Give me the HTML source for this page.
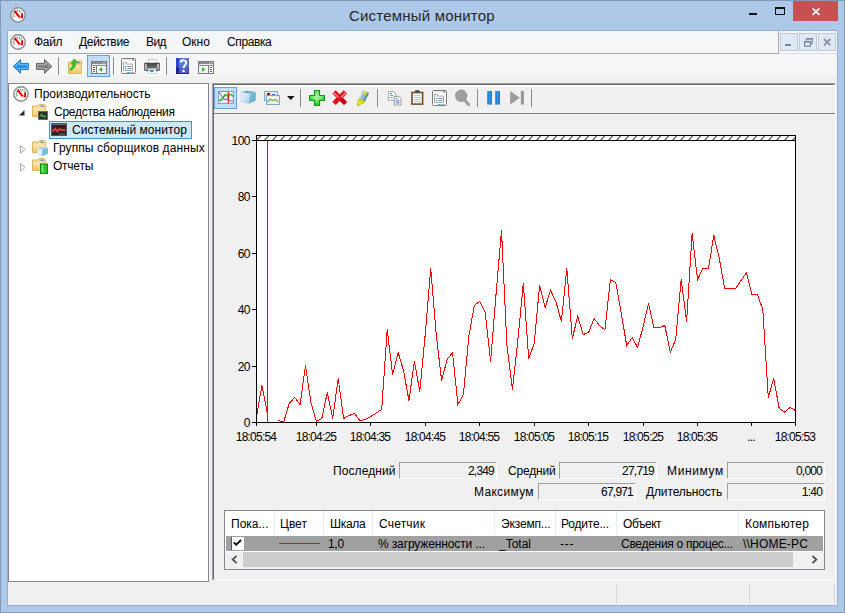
<!DOCTYPE html>
<html><head><meta charset="utf-8">
<style>
*{box-sizing:border-box;margin:0;padding:0}
html,body{width:845px;height:613px;overflow:hidden}
body{background:#adc8e8;font-family:"Liberation Sans",sans-serif;font-size:12px;color:#000;position:relative}
.abs{position:absolute}
.t{position:absolute;white-space:nowrap;line-height:14px;height:14px}
#frame{left:0;top:0;width:845px;height:613px;border:1px solid #8299b7}
#inner{left:7px;top:30px;width:831px;height:576px;border:1px solid #93b1da;background:#f0f0f0}
#menubar{left:8px;top:31px;width:829px;height:23px;background:#f5f6f7;border-bottom:1px solid #dcdde0}
#menuband{left:8px;top:31px;width:771px;height:23px;border-bottom:1px solid #a9a9a9;border-right:1px solid #a9a9a9}
#toolbar{left:8px;top:54px;width:829px;height:22px;background:#f5f6f7}
#tbshadow{left:8px;top:77px;width:829px;height:3px;background:#ebebeb}
#tree{left:8px;top:83px;width:201px;height:499px;background:#fff;border:1px solid #828790}
#rp{left:212px;top:83px;width:624px;height:498px;border-top:1px solid #a0a0a0;border-left:1px solid #a0a0a0;border-right:1px solid #fff;border-bottom:1px solid #fff;background:#f0f0f0}
#rp2{left:213px;top:84px;width:622px;height:496px;border-top:1px solid #696969;border-left:1px solid #696969;border-right:1px solid #f0f0f0;border-bottom:1px solid #f0f0f0}
#rptb{left:214px;top:85px;width:621px;height:29px;background:#f0f0f0;border-top:2px solid #fff;border-bottom:1px solid #828282}
.ax{letter-spacing:-0.5px}
.xl{letter-spacing:-0.78px}
.sep{position:absolute;width:1px;background:#8c8c8c}
.selbtn{position:absolute;background:#c4ddf6;border:1px solid #62a2e4}
.sunk{position:absolute;height:17px;width:98px;border-top:1px solid #a0a0a0;border-left:1px solid #a0a0a0;border-bottom:1px solid #fff;border-right:1px solid #fff;background:#f0f0f0}
.mdi{position:absolute;top:33px;width:18px;height:18px;background:#dfe9f5;border:1px solid #c0cad6}
</style></head><body>
<div class="abs" id="frame"></div>
<div class="abs" id="inner"></div>
<!-- title -->
<div class="t" id="title" style="left:349px;top:7px;font-size:15px;line-height:18px;height:18px;color:#262626;letter-spacing:0.2px">Системный монитор</div>
<div class="abs" style="left:749px;top:13px;width:8px;height:2px;background:#111"></div>
<div class="abs" style="left:775px;top:7px;width:10px;height:8px;border:1px solid #111;border-top-width:2px"></div>
<div class="abs" style="left:793px;top:1px;width:45px;height:20px;background:#c75050"></div>
<svg class="abs" style="left:811px;top:7px" width="10" height="9" viewBox="0 0 10 9"><path d="M1.6 1.4 L8.4 7.8 M8.4 1.4 L1.6 7.8" stroke="#fff" stroke-width="1.7" fill="none"/></svg>
<!-- menubar -->
<div class="abs" id="menubar"></div>
<div class="abs" id="menuband"></div>
<div class="t" id="m1" style="left:34px;top:35px;letter-spacing:-0.3px">Файл</div>
<div class="t" id="m2" style="left:79px;top:35px;letter-spacing:-0.33px">Действие</div>
<div class="t" id="m3" style="left:146px;top:35px;letter-spacing:-0.6px">Вид</div>
<div class="t" id="m4" style="left:182px;top:35px">Окно</div>
<div class="t" id="m5" style="left:227px;top:35px;letter-spacing:-0.38px">Справка</div>
<div class="mdi" style="left:780px"></div>
<div class="mdi" style="left:799px"></div>
<div class="mdi" style="left:818px"></div>
<!-- toolbar -->
<div class="abs" id="toolbar"></div>
<div class="sep" style="left:58px;top:57px;height:18px"></div>
<div class="selbtn" style="left:87px;top:55px;width:23px;height:22px"></div>
<div class="sep" style="left:113px;top:57px;height:18px"></div>
<div class="sep" style="left:166px;top:57px;height:18px"></div>
<!-- tree -->
<div class="abs" id="tree"></div>
<div class="t" id="tr1" style="left:34px;top:87px">Производительность</div>
<div class="t" id="tr2" style="left:54px;top:105px;letter-spacing:-0.245px">Средства наблюдения</div>
<div class="abs" style="left:49px;top:121px;width:143px;height:18px;background:#cbe8f6;border:1px solid #26a0da"></div>
<div class="t" id="tr3" style="left:72px;top:123px;letter-spacing:0.06px">Системный монитор</div>
<div class="t" id="tr4" style="left:53px;top:141px;letter-spacing:0.1px">Группы сборщиков данных</div>
<div class="t" id="tr5" style="left:53px;top:159px;letter-spacing:-0.24px">Отчеты</div>
<!-- right panel -->
<div class="abs" id="rp"></div>
<div class="abs" id="rp2"></div>
<div class="abs" id="rptb"></div>
<div class="selbtn" style="left:214px;top:87px;width:23px;height:22px"></div>
<div class="sep" style="left:300px;top:89px;height:18px"></div>
<div class="sep" style="left:377px;top:89px;height:18px"></div>
<div class="sep" style="left:477px;top:89px;height:18px"></div>
<div class="sep" style="left:531px;top:89px;height:18px"></div>
<!-- chart -->
<svg class="abs" id="chart" style="left:214px;top:114px" width="621" height="340" viewBox="214 114 621 340">
<defs><pattern id="hatch" x="256" y="136" width="8" height="4" patternUnits="userSpaceOnUse"><path d="M0.6 4.2 L4.8 -0.2" stroke="#4a4a4a" stroke-width="1.1" fill="none"/></pattern></defs>
<rect x="256" y="135" width="540" height="288" fill="#fff"/>
<rect x="257" y="136" width="538" height="4" fill="url(#hatch)"/>
<polyline points="256.5,416.5 261.9,385.5 267.4,413.5 267.5,421.5" fill="none" stroke="#f00" stroke-width="1" shape-rendering="crispEdges"/>
<polyline points="278.3,420.5 283.7,422.0 289.2,403.5 294.6,397.5 300.1,404.5 305.5,365.5 310.9,402.5 316.4,421.5 321.8,418.5 327.3,392.5 332.7,418.5 338.2,378.5 343.6,418.5 349.1,415.5 354.5,413.5 359.9,420.5 365.4,419.5 370.8,416.5 376.3,413.0 381.7,409.5 387.2,329.5 392.6,374.5 398.1,352.5 403.5,370.5 408.9,400.5 414.4,361.5 419.8,391.5 425.3,333.5 430.7,268.5 436.2,334.5 441.6,380.5 447.1,359.5 452.5,352.5 457.9,404.5 463.4,394.5 468.8,336.5 474.3,305.5 479.7,301.5 485.2,312.5 490.6,361.5 496.1,293.5 501.5,230.5 506.9,345.5 512.4,389.5 517.8,340.5 523.3,283.5 528.7,358.5 534.2,343.5 539.6,285.5 545.1,307.5 550.5,290.5 555.9,301.5 561.4,321.5 566.8,268.5 572.3,338.5 577.7,316.5 583.2,334.5 588.6,332.5 594.1,318.5 599.5,325.5 604.9,330.0 610.4,279.5 615.8,282.5 621.3,313.5 626.7,345.5 632.2,337.5 637.6,347.5 643.1,326.5 648.5,303.5 653.9,327.5 659.4,327.5 664.8,325.5 670.3,352.5 675.7,339.5 681.2,279.5 686.6,321.5 692.1,233.5 697.5,279.5 702.9,268.5 708.4,268.5 713.8,235.5 719.3,258.5 724.7,288.5 730.2,288.5 735.6,288.5 741.1,280.5 746.5,272.5 751.9,294.5 757.4,294.5 762.8,309.5 768.3,397.5 773.7,378.5 779.2,408.5 784.6,412.0 790.1,407.5 795.5,410.5" fill="none" stroke="#f00" stroke-width="1" shape-rendering="crispEdges"/>
<rect x="267" y="141" width="1" height="281" fill="#f00"/>
<g fill="#000" shape-rendering="crispEdges">
<rect x="256" y="135" width="540" height="1"/>
<rect x="256" y="140" width="540" height="1"/>
<rect x="256" y="135" width="1" height="291"/>
<rect x="795" y="135" width="1" height="291"/>
<rect x="252" y="422" width="544" height="1"/>
<rect x="252" y="140" width="4" height="1"/>
<rect x="252" y="196" width="4" height="1"/>
<rect x="252" y="253" width="4" height="1"/>
<rect x="252" y="309" width="4" height="1"/>
<rect x="252" y="366" width="4" height="1"/>
<rect x="252" y="422" width="4" height="1"/>
<rect x="316" y="422" width="1" height="4"/>
<rect x="370" y="422" width="1" height="4"/>
<rect x="425" y="422" width="1" height="4"/>
<rect x="479" y="422" width="1" height="4"/>
<rect x="534" y="422" width="1" height="4"/>
<rect x="588" y="422" width="1" height="4"/>
<rect x="643" y="422" width="1" height="4"/>
<rect x="697" y="422" width="1" height="4"/>
<rect x="751" y="422" width="1" height="4"/>
</g>
</svg>
<div class="t ax" style="right:595px;top:134px">100</div>
<div class="t ax" style="right:595px;top:190px">80</div>
<div class="t ax" style="right:595px;top:247px">60</div>
<div class="t ax" style="right:595px;top:303px">40</div>
<div class="t ax" style="right:595px;top:360px">20</div>
<div class="t ax" style="right:595px;top:416px">0</div>
<div class="t ax xl" style="left:226px;width:60px;text-align:center;top:430px">18:05:54</div>
<div class="t ax xl" style="left:286px;width:60px;text-align:center;top:430px">18:04:25</div>
<div class="t ax xl" style="left:340px;width:60px;text-align:center;top:430px">18:04:35</div>
<div class="t ax xl" style="left:395px;width:60px;text-align:center;top:430px">18:04:45</div>
<div class="t ax xl" style="left:449px;width:60px;text-align:center;top:430px">18:04:55</div>
<div class="t ax xl" style="left:504px;width:60px;text-align:center;top:430px">18:05:05</div>
<div class="t ax xl" style="left:558px;width:60px;text-align:center;top:430px">18:05:15</div>
<div class="t ax xl" style="left:613px;width:60px;text-align:center;top:430px">18:05:25</div>
<div class="t ax xl" style="left:667px;width:60px;text-align:center;top:430px">18:05:35</div>
<div class="t ax xl" style="left:721px;width:60px;text-align:center;top:430px">...</div>
<div class="t ax xl" style="left:765px;width:60px;text-align:center;top:430px">18:05:53</div>
<!-- stats -->
<div class="t" id="s1" style="left:333px;top:464px;letter-spacing:0.09px">Последний</div>
<div class="sunk" style="left:399px;top:462px"></div>
<div class="t" id="v1" style="right:351px;top:464px;letter-spacing:-0.8px">2,349</div>
<div class="t" id="s2" style="left:508px;top:464px;letter-spacing:-0.2px">Средний</div>
<div class="sunk" style="left:559px;top:462px"></div>
<div class="t" id="v2" style="right:191px;top:464px;letter-spacing:-0.8px">27,719</div>
<div class="t" id="s3" style="left:667px;top:464px;letter-spacing:0.63px">Минимум</div>
<div class="sunk" style="left:727px;top:462px"></div>
<div class="t" id="v3" style="right:23px;top:464px;letter-spacing:-0.8px">0,000</div>
<div class="t" id="s4" style="left:474px;top:485px;letter-spacing:0.31px">Максимум</div>
<div class="sunk" style="left:538px;top:483px"></div>
<div class="t" id="v4" style="right:212px;top:485px;letter-spacing:-0.8px">67,971</div>
<div class="t" id="s5" style="left:646px;top:485px;letter-spacing:-0.14px">Длительность</div>
<div class="sunk" style="left:727px;top:483px"></div>
<div class="t" id="v5" style="right:23px;top:485px;letter-spacing:-0.8px">1:40</div>
<!-- list -->
<div class="abs" id="list" style="left:224px;top:510px;width:601px;height:60px;background:#fff;border:1px solid #828790"></div>
<div class="abs" style="left:226px;top:536px;width:597px;height:15px;background:#a0a0a0"></div>
<div class="abs" style="left:225px;top:552px;width:599px;height:17px;background:#f0f0f0"></div>
<div class="abs" style="left:243px;top:552px;width:550px;height:15px;background:#cdcdcd"></div>
<!-- LIST -->
<div class="abs" style="left:274px;top:511px;width:1px;height:24px;background:#e3ebf4"></div>
<div class="abs" style="left:323px;top:511px;width:1px;height:24px;background:#e3ebf4"></div>
<div class="abs" style="left:372px;top:511px;width:1px;height:24px;background:#e3ebf4"></div>
<div class="abs" style="left:494px;top:511px;width:1px;height:24px;background:#e3ebf4"></div>
<div class="abs" style="left:555px;top:511px;width:1px;height:24px;background:#e3ebf4"></div>
<div class="abs" style="left:616px;top:511px;width:1px;height:24px;background:#e3ebf4"></div>
<div class="abs" style="left:738px;top:511px;width:1px;height:24px;background:#e3ebf4"></div>
<div class="t" id="h1" style="left:231px;top:517px">Пока...</div>
<div class="t" id="h2" style="left:280px;top:517px">Цвет</div>
<div class="t" id="h3" style="left:330px;top:517px;letter-spacing:-0.3px">Шкала</div>
<div class="t" id="h4" style="left:379px;top:517px;letter-spacing:0.2px">Счетчик</div>
<div class="t" id="h5" style="left:501px;top:517px;letter-spacing:-0.16px">Экземп...</div>
<div class="t" id="h6" style="left:561px;top:517px;letter-spacing:-0.2px">Родите...</div>
<div class="t" id="h7" style="left:623px;top:517px;letter-spacing:-0.45px">Объект</div>
<div class="t" id="h8" style="left:745px;top:517px;letter-spacing:0.22px">Компьютер</div>
<div class="abs" style="left:231px;top:537px;width:13px;height:13px;background:#fff;border-left:1px solid #555"></div>
<svg class="abs" style="left:233px;top:539px" width="9" height="8" viewBox="0 0 9 8"><path d="M0.8 3.4 L3.2 5.8 L8 1" stroke="#000" stroke-width="1.8" fill="none"/></svg>
<div class="abs" style="left:279px;top:543px;width:41px;height:1px;background:#f00"></div>
<div class="t" id="r3" style="left:328px;top:537px;letter-spacing:-0.3px">1,0</div>
<div class="t" id="r4" style="left:378px;top:537px;letter-spacing:-0.13px">% загруженности ...</div>
<div class="t" id="r5" style="left:499px;top:537px">_Total</div>
<div class="t" id="r6" style="left:560px;top:537px;letter-spacing:0.8px">---</div>
<div class="t" id="r7" style="left:621px;top:537px;letter-spacing:-0.29px">Сведения о процес...</div>
<div class="t" id="r8" style="left:743px;top:537px;letter-spacing:0.2px">\\HOME-PC</div>
<svg class="abs" style="left:231px;top:555px" width="7" height="9" viewBox="0 0 7 9"><path d="M5.6 0.8 L1.6 4.5 L5.6 8.2" stroke="#505050" stroke-width="1.8" fill="none"/></svg>
<svg class="abs" style="left:811px;top:555px" width="7" height="9" viewBox="0 0 7 9"><path d="M1.4 0.8 L5.4 4.5 L1.4 8.2" stroke="#505050" stroke-width="1.8" fill="none"/></svg>
<!-- /LIST -->
<!-- status bar -->
<div class="abs" style="left:8px;top:582px;width:829px;height:23px;background:#f0f0f0"></div>
<div class="abs" style="left:616px;top:584px;width:1px;height:20px;background:#d7d7d7"></div>
<div class="abs" style="left:749px;top:584px;width:1px;height:20px;background:#d7d7d7"></div>
<div class="abs" style="left:834px;top:584px;width:1px;height:20px;background:#d7d7d7"></div>
<!-- ICONS -->
<svg width="0" height="0" style="position:absolute"><defs>
<symbol id="perf" viewBox="0 0 16 16"><circle cx="8" cy="8" r="7.2" fill="#fff" stroke="#8e8e8e" stroke-width="1.5"/><path d="M4.2 10.2 A4.1 4.1 0 0 1 11.6 5.6" stroke="#3f7a62" stroke-width="1.5" stroke-dasharray="1.1 0.9" fill="none"/><path d="M12.1 6.2 L12.1 10.2 L10.6 10.6" stroke="#d80000" stroke-width="1.8" fill="none"/><path d="M4.6 3.8 L9.7 10.4" stroke="#ee0000" stroke-width="2.1"/></symbol>
<linearGradient id="gblue" x1="0" y1="0" x2="0" y2="1"><stop offset="0" stop-color="#4fb4f4"/><stop offset="0.55" stop-color="#1f8fe6"/><stop offset="1" stop-color="#3aa6f0"/></linearGradient>
<linearGradient id="ggray" x1="0" y1="0" x2="0" y2="1"><stop offset="0" stop-color="#a4a4a4"/><stop offset="0.55" stop-color="#7c7c7c"/><stop offset="1" stop-color="#9c9c9c"/></linearGradient>
<linearGradient id="gfold" x1="0" y1="0" x2="0" y2="1"><stop offset="0" stop-color="#fbe8ae"/><stop offset="1" stop-color="#efc868"/></linearGradient>
<linearGradient id="gprn" x1="0" y1="0" x2="0" y2="1"><stop offset="0" stop-color="#3c3c3c"/><stop offset="1" stop-color="#8e8e8e"/></linearGradient>
<linearGradient id="gpause" x1="0" y1="0" x2="1" y2="0"><stop offset="0" stop-color="#1766c4"/><stop offset="0.5" stop-color="#2f9df0"/><stop offset="1" stop-color="#1766c4"/></linearGradient>
<radialGradient id="gplus" cx="0.5" cy="0.45" r="0.6"><stop offset="0" stop-color="#b4f6b4"/><stop offset="0.5" stop-color="#5fe05f"/><stop offset="1" stop-color="#22bc22"/></radialGradient>
<symbol id="win" viewBox="0 0 16 13"><rect x="0.5" y="0.5" width="15" height="12" fill="#fff" stroke="#7a7a7a"/><rect x="1" y="1" width="14" height="2" fill="#8a8a8a"/><rect x="11.5" y="1.2" width="1" height="1" fill="#fff"/><rect x="13.5" y="1.2" width="1" height="1" fill="#fff"/><rect x="1" y="3" width="14" height="1" fill="#e8e8e8"/><rect x="1" y="4" width="14" height="1" fill="#8a8a8a"/></symbol>
<symbol id="prop" viewBox="0 0 15 16"><rect x="0.5" y="0.5" width="14" height="15" rx="1" fill="#fff" stroke="#7c7c7c"/><rect x="1.5" y="1.5" width="12" height="1" fill="#d8d8d8"/><rect x="11.5" y="1" width="1.5" height="1.5" fill="#5a6a9a"/><path d="M2.5 4.5 H5.5 V6 H11.5 V12.5 H2.5 Z" fill="#f4f5fa" stroke="#a3aabd"/><rect x="4" y="7.8" width="1.4" height="1.4" fill="#19b4f0"/><rect x="4" y="10" width="1.2" height="1.2" fill="#8a90a0"/><rect x="6.3" y="8" width="4" height="1" fill="#8a90a0"/><rect x="6.3" y="10" width="4" height="1" fill="#8a90a0"/><rect x="6" y="14" width="3" height="1" fill="#19c0f4"/><rect x="10" y="14" width="3" height="1" fill="#b0b0b0"/></symbol>
</defs></svg>
<!-- title + menu icons -->
<svg class="abs" style="left:10px;top:7px" width="16" height="16"><use href="#perf"/></svg>
<svg class="abs" style="left:10px;top:34px" width="16" height="16"><use href="#perf"/></svg>
<svg class="abs" style="left:13px;top:86px" width="16" height="16"><use href="#perf"/></svg>
<!-- main toolbar icons -->
<svg class="abs" style="left:12px;top:58px" width="42" height="17" viewBox="12 58 42 17">
<path d="M13.4 66.4 L20.5 59.6 V63.4 H28.3 V69.4 H20.5 V73.2 Z" fill="url(#gblue)" stroke="#1a6fcc" stroke-width="1" stroke-linejoin="round"/>
<path d="M15 66.4 L19.5 62 V64.4 H27.3 V68.4 H19.5 V70.8 Z" fill="none" stroke="#8ad0fb" stroke-width="0.8" opacity="0.85"/>
<path d="M51.8 66.4 L44.6 59.6 V63.4 H36.6 V69.4 H44.6 V73.2 Z" fill="url(#ggray)" stroke="#5c5c5c" stroke-width="1" stroke-linejoin="round"/>
<path d="M50.2 66.4 L45.6 62 V64.4 H37.6 V68.4 H45.6 V70.8 Z" fill="none" stroke="#c2c2c2" stroke-width="0.8" opacity="0.8"/>
</svg>
<svg class="abs" style="left:67px;top:58px" width="16" height="17" viewBox="67 58 16 17">
<path d="M68.5 62 H75 L76 61 H81 L81.5 62 V73.5 H68.5 Z" fill="#f3d587" stroke="#d8b25e" stroke-width="1"/>
<rect x="69" y="64.5" width="12.5" height="9" fill="url(#gfold)" stroke="#dcb860" stroke-width="0.6"/>
<rect x="77.3" y="62" width="2.6" height="1.4" rx="0.6" fill="#3d8fe8"/>
<path d="M69.8 69.4 C72 67.8 72.8 65.6 73 63.2 L71 63.6 L74.2 58.8 L77.6 62.6 L75.8 62.8 C76 66.6 73.8 69.2 70.6 70.6 Z" fill="#3fc030" stroke="#2a9a20" stroke-width="0.6"/>
</svg>
<svg class="abs" style="left:91px;top:61px" width="16" height="13"><use href="#win"/><rect x="1" y="5" width="4" height="7" fill="#f4f4f4"/><rect x="5" y="5" width="1" height="7" fill="#7a7a7a"/><rect x="2" y="6" width="2" height="1" fill="#2f6fd0"/><rect x="2" y="8" width="2" height="1" fill="#2f6fd0"/><rect x="2" y="10" width="2" height="1" fill="#2f6fd0"/><path d="M11 6 L11 11 L7.6 8.5 Z" fill="#3dbb2e"/><rect x="12" y="5" width="3" height="7" fill="#f0f0f0"/></svg>
<svg class="abs" style="left:121px;top:58px" width="15" height="16"><use href="#prop"/></svg>
<svg class="abs" style="left:144px;top:59px" width="16" height="15" viewBox="144 59 16 15">
<rect x="148.5" y="59.5" width="7.5" height="4" fill="#fff" stroke="#c4c4c4"/>
<rect x="144.3" y="63" width="15.5" height="7.6" rx="0.8" fill="url(#gprn)" stroke="#555" stroke-width="0.6"/>
<rect x="145" y="64" width="2" height="4.5" fill="#b4b4b4"/><rect x="157" y="64" width="2" height="4.5" fill="#b4b4b4"/>
<rect x="147" y="68.6" width="10" height="1.4" fill="#e8e8e8"/>
<rect x="148.5" y="70" width="7.5" height="3.5" fill="#fff" stroke="#b9cbd6" stroke-width="0.8"/>
<rect x="150.3" y="70" width="1.5" height="2" fill="#2a6ae0"/><rect x="151.8" y="70" width="1.5" height="2" fill="#2f9a3a"/>
<rect x="147" y="69.8" width="1.3" height="1.2" fill="#222"/><rect x="156" y="69.8" width="1.3" height="1.2" fill="#222"/>
</svg>
<svg class="abs" style="left:176px;top:58px" width="13" height="16" viewBox="0 0 13 16">
<rect x="0" y="0" width="13" height="16" fill="#4f6fdc"/><rect x="0" y="0" width="3" height="16" fill="#2b44c4"/>
<rect x="0" y="9.5" width="13" height="6.5" fill="#3a3fae" opacity="0.85"/><rect x="0" y="9.5" width="3" height="6.5" fill="#22228a"/>
<rect x="3" y="0" width="9" height="16" fill="#6c88e8" opacity="0.35"/>
<path d="M4.6 4.6 C4.6 1.6 10.2 1.6 10.2 4.8 C10.2 7 7.6 7.4 7.6 10.2" stroke="#fff" stroke-width="2" fill="none"/><circle cx="7.5" cy="13" r="1.3" fill="#fff"/>
<rect x="0" y="15.3" width="13" height="0.7" fill="#1a1a60"/>
</svg>
<svg class="abs" style="left:198px;top:61px" width="16" height="13"><use href="#win"/><rect x="1" y="5" width="9" height="7" fill="#f4f4f4"/><rect x="10" y="5" width="1" height="7" fill="#7a7a7a"/><rect x="12" y="6" width="2" height="1" fill="#2f6fd0"/><rect x="12" y="8" width="2" height="1" fill="#2f6fd0"/><rect x="12" y="10" width="2" height="1" fill="#2f6fd0"/><path d="M4 6 L4 11 L7.4 8.5 Z" fill="#3dbb2e"/></svg>
<!-- /ICONS -->
<!-- ICONS2 -->
<!-- chart icon -->
<svg class="abs" style="left:218px;top:91px" width="16" height="13" viewBox="0 0 16 13">
<rect x="0.5" y="0.5" width="15" height="12" fill="#e6f1fa" stroke="#8a9cc4"/>
<path d="M4.5 1 V12 M8.5 1 V12 M12.5 1 V12 M1 4.5 H15 M1 8.5 H15" stroke="#fff" stroke-width="0.8"/>
<path d="M1.2 1.2 L5.5 8.3 H11 L12 10 H15" stroke="#4d6cc8" stroke-width="1" fill="none"/>
<path d="M1 9 L2.5 9.6 L5 7 L7 3.8 L8.6 4 L10 6 L12 3.4 L13.5 3.6 L15 5.6" stroke="#2fae2a" stroke-width="1.5" fill="none"/>
<rect x="9.7" y="0.6" width="1.2" height="11.8" fill="#e81818"/>
</svg>
<!-- cube -->
<svg class="abs" style="left:239px;top:90px" width="18" height="15" viewBox="239 90 18 15">
<defs><linearGradient id="cf" x1="0" y1="0" x2="1" y2="1"><stop offset="0" stop-color="#f4f9fd"/><stop offset="0.5" stop-color="#cfe3f4"/><stop offset="1" stop-color="#9ecbe4"/></linearGradient>
<linearGradient id="cr" x1="0" y1="0" x2="1" y2="1"><stop offset="0" stop-color="#8cc7dc"/><stop offset="1" stop-color="#4fa9c4"/></linearGradient></defs>
<path d="M240.3 92.6 L246.5 90.8 L256 92 L249.5 93.6 Z" fill="#6aa9c8"/>
<path d="M240.3 92.6 L249.5 93.6 L249.2 103.8 L240.6 101.6 Z" fill="url(#cf)" stroke="#b9d7ea" stroke-width="0.5"/>
<path d="M249.5 93.6 L256 92 L255.6 100.6 L249.2 103.8 Z" fill="url(#cr)"/>
</svg>
<!-- windows icon -->
<svg class="abs" style="left:264px;top:91px" width="16" height="14" viewBox="0 0 16 14">
<rect x="0.5" y="0.5" width="13" height="9" fill="#ece9e2" stroke="#86a8dc"/>
<rect x="3" y="2" width="3" height="2" fill="#a80024"/><rect x="8" y="3" width="3" height="1" fill="#3a6fe0"/>
<rect x="2.5" y="4.5" width="13" height="9" fill="#eeebe2" stroke="#7ea6da"/>
<rect x="5" y="6" width="1.6" height="6" fill="#fff"/><rect x="8" y="6" width="1.6" height="6" fill="#fff"/><rect x="11" y="6" width="1.6" height="6" fill="#fff"/>
<path d="M3.5 11.3 L6 8 L8.5 9.6 L11.5 8.4 L14 11" stroke="#55b83a" stroke-width="1.2" fill="none"/>
</svg>
<svg class="abs" style="left:287px;top:96px" width="8" height="4" viewBox="0 0 8 4"><path d="M0 0 H7.6 L3.8 4 Z" fill="#111"/></svg>
<!-- plus -->
<svg class="abs" style="left:309px;top:90px" width="16" height="16" viewBox="0 0 16 16">
<path d="M5.5 0.5 H10.5 V5.5 H15.5 V10.5 H10.5 V15.5 H5.5 V10.5 H0.5 V5.5 H5.5 Z" fill="url(#gplus)" stroke="#0c9c10" stroke-width="1.2" stroke-linejoin="round"/>
<path d="M6.8 1.8 H9.2 V6.8 H14.2 M6.8 1.8 V6.8 H1.8" stroke="#a4f2a4" stroke-width="0.8" fill="none" opacity="0.8"/>
</svg>
<!-- red X -->
<svg class="abs" style="left:331px;top:89px" width="18" height="18" viewBox="331 89 18 18">
<path d="M334 92 L345.4 103.4 M345.4 92 L334 103.4" stroke="#e01018" stroke-width="4.6" stroke-linecap="butt"/>
<path d="M333.4 92.6 L338.6 97.6 M346 92.6 L341 97.4" stroke="#f4707a" stroke-width="2" stroke-linecap="butt"/>
<path d="M341.5 99.5 L345.6 103.6" stroke="#c40008" stroke-width="3" stroke-linecap="butt"/>
</svg>
<!-- pen -->
<svg class="abs" style="left:355px;top:89px" width="16" height="18" viewBox="355 89 16 18">
<path d="M363 90.4 L369 93 L364.4 102.6 L358.6 99.8 Z" fill="#8fbacc"/>
<path d="M367.2 92.2 L369 93 L364.4 102.6 L362.8 101.8 Z" fill="#5f8c9e"/>
<path d="M363 90.8 L359.4 99.4" stroke="#c4dce6" stroke-width="1.2"/>
<path d="M363.4 91 L366.8 92.4 L365.6 95.2 L362.6 94 Z" fill="#e4dc08"/>
<path d="M358.6 99.4 L364.6 102.4 L357.4 105.8 Z" fill="#f0e800" stroke="#b0a400" stroke-width="0.7"/>
<path d="M358.4 99.2 L364.8 102.2" stroke="#d8d000" stroke-width="1.8"/>
</svg>
<!-- copy -->
<svg class="abs" style="left:387px;top:90px" width="15" height="16" viewBox="387 90 15 16">
<path d="M388.3 91.5 H393.5 L395.7 93.7 V100.3 H388.3 Z" fill="#fff" stroke="#9c9c9c" stroke-width="0.9"/>
<rect x="390" y="93" width="2" height="1" fill="#3a7fd8"/><rect x="390" y="95" width="3" height="1" fill="#6aa2e4"/><rect x="390" y="97" width="3" height="1" fill="#6aa2e4"/>
<path d="M394.2 96.4 H398.8 L401 98.6 V105 H394.2 Z" fill="#fff" stroke="#8c8c8c" stroke-width="0.9"/>
<rect x="395.6" y="98.4" width="2" height="1" fill="#2f6fd0"/><rect x="395.6" y="100.4" width="4" height="1" fill="#2f6fd0"/><rect x="395.6" y="102.4" width="4" height="1" fill="#2f6fd0"/>
</svg>
<!-- clipboard -->
<svg class="abs" style="left:410px;top:90px" width="15" height="16" viewBox="410 90 15 16">
<rect x="412" y="92.5" width="10.6" height="11.6" fill="#fff" stroke="#7c4a1c" stroke-width="1.6"/>
<rect x="414.8" y="90.6" width="5" height="2.6" fill="#5a5a5a"/><rect x="415.6" y="90.4" width="3.4" height="1" fill="#333"/>
<path d="M413.6 95.6 H421 M413.6 97.6 H421 M413.6 99.6 H421 M413.6 101.6 H421" stroke="#a9cbe8" stroke-width="1"/>
</svg>
<svg class="abs" style="left:432px;top:90px" width="15" height="16"><use href="#prop"/></svg>
<!-- magnifier -->
<svg class="abs" style="left:454px;top:89px" width="18" height="18" viewBox="454 89 18 18">
<circle cx="461.2" cy="95.8" r="6.2" fill="#9e9e9e"/>
<path d="M464.6 100 L468.6 104.6" stroke="#9e9e9e" stroke-width="3" stroke-linecap="round"/>
</svg>
<!-- pause -->
<svg class="abs" style="left:487px;top:91px" width="14" height="14" viewBox="0 0 14 14">
<rect x="0.3" y="0" width="4.6" height="13.6" fill="url(#gpause)"/><rect x="8.3" y="0" width="4.6" height="13.6" fill="url(#gpause)"/>
</svg>
<!-- next -->
<svg class="abs" style="left:510px;top:91px" width="15" height="14" viewBox="0 0 15 14">
<path d="M0.2 0 L9.8 6.8 L0.2 13.6 Z" fill="#9a9a9a"/><rect x="10.8" y="0" width="3.2" height="13.6" fill="#9a9a9a"/>
</svg>
<!-- tree icons -->
<svg class="abs" style="left:19px;top:110px" width="6" height="6" viewBox="0 0 6 6"><path d="M5.5 0 V5.5 H0 Z" fill="#262626"/></svg>
<svg class="abs" style="left:20px;top:145px" width="6" height="9" viewBox="0 0 6 9"><path d="M0.5 0.8 L5 4.4 L0.5 8 Z" fill="#fff" stroke="#a6a6a6" stroke-width="1"/></svg>
<svg class="abs" style="left:20px;top:163px" width="6" height="9" viewBox="0 0 6 9"><path d="M0.5 0.8 L5 4.4 L0.5 8 Z" fill="#fff" stroke="#a6a6a6" stroke-width="1"/></svg>
<svg width="0" height="0" style="position:absolute"><defs><symbol id="fold" viewBox="0 0 16 16"><path d="M0.5 2 H6 L7 0.6 H12.6 L13.4 2 V12.5 H0.5 Z" fill="#f6dc98" stroke="#d9b45e" stroke-width="1"/><rect x="1" y="4.5" width="12" height="7.6" fill="url(#gfold)"/><rect x="8.6" y="1.6" width="3" height="1.4" rx="0.6" fill="#4b97ea"/></symbol></defs></svg>
<svg class="abs" style="left:32px;top:104px" width="16" height="16"><use href="#fold"/><rect x="6.5" y="7.5" width="9" height="8" fill="#2e2e2e" stroke="#6a6a6a"/><path d="M8 12.5 L9.6 10.2 L11 12.8 L12.2 12 L14 12.4" stroke="#42d24a" stroke-width="1.1" fill="none"/></svg>
<svg class="abs" style="left:32px;top:140px" width="16" height="16"><use href="#fold"/><path d="M5 8.4 L9.6 7 L16 8 L15.8 13.8 L10.2 16 L5.2 14.6 Z" fill="#a4d2ea"/><path d="M5 8.4 L10.4 9.6 L10.2 16 L5.2 14.6 Z" fill="#dcecf8"/><path d="M10.4 9.6 L16 8 L15.8 13.8 L10.2 16 Z" fill="#74bcd8"/></svg>
<svg class="abs" style="left:32px;top:158px" width="16" height="16"><use href="#fold"/><rect x="8.5" y="6" width="7" height="9.6" fill="#2fc22f" stroke="#168a16"/><rect x="9.6" y="7" width="1.8" height="7.6" fill="#7be87b"/></svg>
<!-- sysmon icon -->
<svg class="abs" style="left:51px;top:123px" width="16" height="13" viewBox="0 0 16 13">
<rect x="0" y="0" width="16" height="13" fill="#2a2426"/><rect x="0" y="0" width="16" height="2" fill="#6e6a6c"/><rect x="0.5" y="0.5" width="15" height="12" fill="none" stroke="#5a5658"/>
<path d="M1.5 8.6 L4 5.6 L6.4 8.4 L8.4 6 L10 6.8 L14.5 6.8" stroke="#ee3a3a" stroke-width="1.8" fill="none"/>
<rect x="8" y="10.6" width="6" height="1" fill="#6a6668"/>
</svg>
<!-- MDI glyphs -->
<div class="abs" style="left:785px;top:44px;width:6px;height:2px;background:#7a8696"></div>
<svg class="abs" style="left:803px;top:38px" width="11" height="11" viewBox="0 0 11 11"><path d="M3.5 2.5 V0.8 H9.2 V5.5 H7.5" stroke="#7a8696" stroke-width="1.2" fill="none"/><rect x="1.6" y="3.6" width="5.8" height="4.6" fill="none" stroke="#7a8696" stroke-width="1.2"/><rect x="1" y="3" width="7" height="1.4" fill="#7a8696"/><rect x="3" y="0.2" width="6.8" height="1.2" fill="#7a8696"/></svg>
<svg class="abs" style="left:823px;top:38px" width="9" height="9" viewBox="0 0 9 9"><path d="M1 1 L7.4 7.4 M7.4 1 L1 7.4" stroke="#8a95a4" stroke-width="1.9"/></svg>
<!-- /ICONS2 -->
</body></html>
